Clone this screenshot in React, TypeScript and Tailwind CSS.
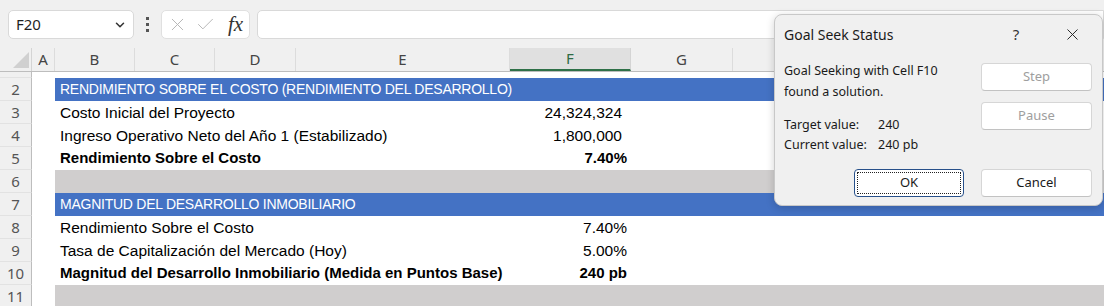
import React from "react";
import { ChevronDown, X, Check } from "lucide-react";

const cellFont = { fontFamily: '"Liberation Sans", Arial, sans-serif' };

type Row = {
  n: number;
  kind: "blank" | "blue" | "gray" | "data";
  label?: string;
  value?: string;
  bold?: boolean;
  pr?: string;
};

const rows: Row[] = [
  { n: 2, kind: "blue", label: "RENDIMIENTO SOBRE EL COSTO (RENDIMIENTO DEL DESARROLLO)" },
  { n: 3, kind: "data", label: "Costo Inicial del Proyecto", value: "24,324,324", pr: "pr-[9px]" },
  { n: 4, kind: "data", label: "Ingreso Operativo Neto del Año 1 (Estabilizado)", value: "1,800,000", pr: "pr-[9px]" },
  { n: 5, kind: "data", label: "Rendimiento Sobre el Costo", value: "7.40%", bold: true, pr: "pr-[4px]" },
  { n: 6, kind: "gray" },
  { n: 7, kind: "blue", label: "MAGNITUD DEL DESARROLLO INMOBILIARIO" },
  { n: 8, kind: "data", label: "Rendimiento Sobre el Costo", value: "7.40%", pr: "pr-[4px]" },
  { n: 9, kind: "data", label: "Tasa de Capitalización del Mercado (Hoy)", value: "5.00%", pr: "pr-[4px]" },
  { n: 10, kind: "data", label: "Magnitud del Desarrollo Inmobiliario (Medida en Puntos Base)", value: "240 pb", bold: true, pr: "pr-[4px]" },
  { n: 11, kind: "gray" },
];

const cols = [
  { l: "A", w: "w-[23px]" },
  { l: "B", w: "w-[80px]" },
  { l: "C", w: "w-[80px]" },
  { l: "D", w: "w-[81px]" },
  { l: "E", w: "w-[214px]" },
  { l: "F", w: "w-[121px]", sel: true },
  { l: "G", w: "w-[102px]" },
  { l: "", w: "w-[100px]" },
  { l: "", w: "w-[100px]" },
  { l: "", w: "w-[100px]" },
  { l: "", w: "w-[100px]" },
];

function DialogButton({
  children,
  disabled,
  focused,
  className,
}: {
  children: React.ReactNode;
  disabled?: boolean;
  focused?: boolean;
  className?: string;
}) {
  return (
    <div
      className={
        "h-[28px] rounded-[4px] bg-white flex items-center justify-center text-[13px] " +
        (focused
          ? "border-[1.5px] border-[#27508a] p-[2px] "
          : "border border-[#d6d6d6] border-b-[#c2c2c2] ") +
        (disabled ? "text-[#9e9e9e] " : "text-[#1a1a1a] ") +
        (className || "")
      }
    >
      {focused ? (
        <div className="w-full h-full border border-dotted border-[#222] flex items-center justify-center">
          {children}
        </div>
      ) : (
        children
      )}
    </div>
  );
}

export default function App() {
  return (
    <div
      className="relative w-[1104px] h-[306px] overflow-hidden bg-white"
      style={{ fontFamily: '"Noto Sans", "Open Sans", sans-serif' }}
    >
      {/* Formula bar */}
      <div className="h-[48px] bg-[#f0f0f0] flex items-start pt-[10px] pl-[8px]">
        <div className="w-[126px] shrink-0 h-[29px] bg-white border border-[#d9d9d9] rounded-[5px] flex items-center pl-[7px] pr-[6px]">
          <span className="text-[15px] text-[#1f1f1f] flex-1">F20</span>
          <ChevronDown size={14} strokeWidth={2.6} className="text-[#333]" />
        </div>
        <div className="w-[27px] shrink-0 h-[29px] flex flex-col items-center justify-center gap-[3px]">
          <div className="w-[3px] h-[3px] bg-[#555]" />
          <div className="w-[3px] h-[3px] bg-[#555]" />
          <div className="w-[3px] h-[3px] bg-[#555]" />
        </div>
        <div className="w-[89px] shrink-0 h-[29px] bg-white border border-[#e0e0e0] rounded-[5px] flex items-center pl-[5px] gap-[7px]">
          <X size={21} strokeWidth={1.1} className="text-[#b5b5b5]" />
          <Check size={21} strokeWidth={1.1} className="text-[#b5b5b5]" />
          <span
            className="text-[21px] italic text-[#333] ml-[5px] leading-none"
            style={{ fontFamily: '"Liberation Serif", "Times New Roman", serif' }}
          >
            fx
          </span>
        </div>
        <div className="ml-[7px] flex-1 h-[29px] bg-white border border-[#d9d9d9] rounded-l-[5px]" />
      </div>

      {/* Column headers */}
      <div className="h-[24px] bg-[#f0f0f0] flex border-b border-[#bdbdbd]">
        <div className="w-[32px] shrink-0 h-[23px] border-r border-[#d4d4d4] flex items-end justify-end pr-[2px] pb-[3px]">
          <svg width="16" height="16" viewBox="0 0 16 16">
            <polygon points="16,0 16,16 0,16" fill="#d0d0d0" />
          </svg>
        </div>
        {cols.map((c, i) => (
          <div
            key={i}
            className={
              c.w +
              " shrink-0 h-[23px] flex items-center justify-center text-[15px] " +
              (c.sel
                ? "bg-[#e0e0e0] text-[#2f6b45] border-b-2 border-[#2e7048] border-r border-r-[#d4d4d4]"
                : "text-[#444] border-r border-[#dcdcdc]")
            }
          >
            {c.l}
          </div>
        ))}
      </div>

      {/* Row 1 */}
      <div className="h-[6px] flex">
        <div className="w-[32px] shrink-0 bg-[#f0f0f0] border-r border-[#bdbdbd] border-b border-b-[#e2e2e2]" />
        <div className="flex-1" />
      </div>

      {/* Data rows */}
      {rows.map((r) => (
        <div key={r.n} className="h-[23px] flex">
          <div className="w-[32px] shrink-0 bg-[#f0f0f0] border-r border-[#bdbdbd] border-b border-b-[#e2e2e2] flex items-center justify-center text-[15px] text-[#555]">
            {r.n}
          </div>
          <div className="w-[23px] shrink-0" />
          <div
            className={
              "flex-1 flex items-center " +
              (r.kind === "blue" ? "bg-[#4472c4] text-white" : r.kind === "gray" ? "bg-[#d0cece]" : "text-black")
            }
            style={cellFont}
          >
            {r.label && (
              <div
                className={
                  "w-[455px] shrink-0 pl-[5px] whitespace-nowrap " +
                  (r.kind === "blue"
                    ? "text-[14px] tracking-[-0.25px]"
                    : r.bold
                    ? "text-[15px] font-bold"
                    : "text-[15.5px]")
                }
              >
                {r.label}
              </div>
            )}
            {r.value && (
              <div
                className={
                  "w-[121px] shrink-0 text-right " +
                  (r.pr || "") +
                  (r.bold ? " font-bold text-[15px]" : " text-[15.5px]")
                }
              >
                {r.value}
              </div>
            )}
          </div>
        </div>
      ))}

      {/* Goal Seek Status dialog */}
      <div className="absolute left-[774px] top-[14px] w-[329px] h-[192px] bg-[#f0f0f0] border border-[#c8c8c8] rounded-[8px] shadow-[0_2px_8px_rgba(0,0,0,0.18)] flex flex-col pl-[9px] pr-[10px]">
        <div className="h-[38px] flex items-center">
          <span className="text-[14px] text-[#1a1a1a] flex-1">Goal Seek Status</span>
          <span className="text-[15px] text-[#333] w-[20px] text-center mr-[37px]">?</span>
          <X size={19} strokeWidth={1.2} className="text-[#222] mr-[10px]" />
        </div>
        <div className="flex pt-[7px]">
          <div className="flex-1 text-[12.5px] text-[#1a1a1a]">
            <div className="leading-[21px] w-fit">Goal Seeking with Cell F10</div>
            <div className="leading-[21px] w-fit">found a solution.</div>
            <div className="mt-[13px] leading-[20px] flex">
              <span className="w-[94px]">Target value:</span>
              <span>240</span>
            </div>
            <div className="leading-[20px] flex">
              <span className="w-[94px]">Current value:</span>
              <span>240 pb</span>
            </div>
          </div>
          <div className="w-[111px] flex flex-col gap-[11px] pt-[3px]">
            <DialogButton disabled className="h-[27px]">Step</DialogButton>
            <DialogButton disabled className="h-[27px]">Pause</DialogButton>
          </div>
        </div>
        <div className="flex justify-end gap-[17px] mt-[14px]">
          <DialogButton focused className="w-[110px]">OK</DialogButton>
          <DialogButton className="w-[111px]">Cancel</DialogButton>
        </div>
      </div>
    </div>
  );
}
